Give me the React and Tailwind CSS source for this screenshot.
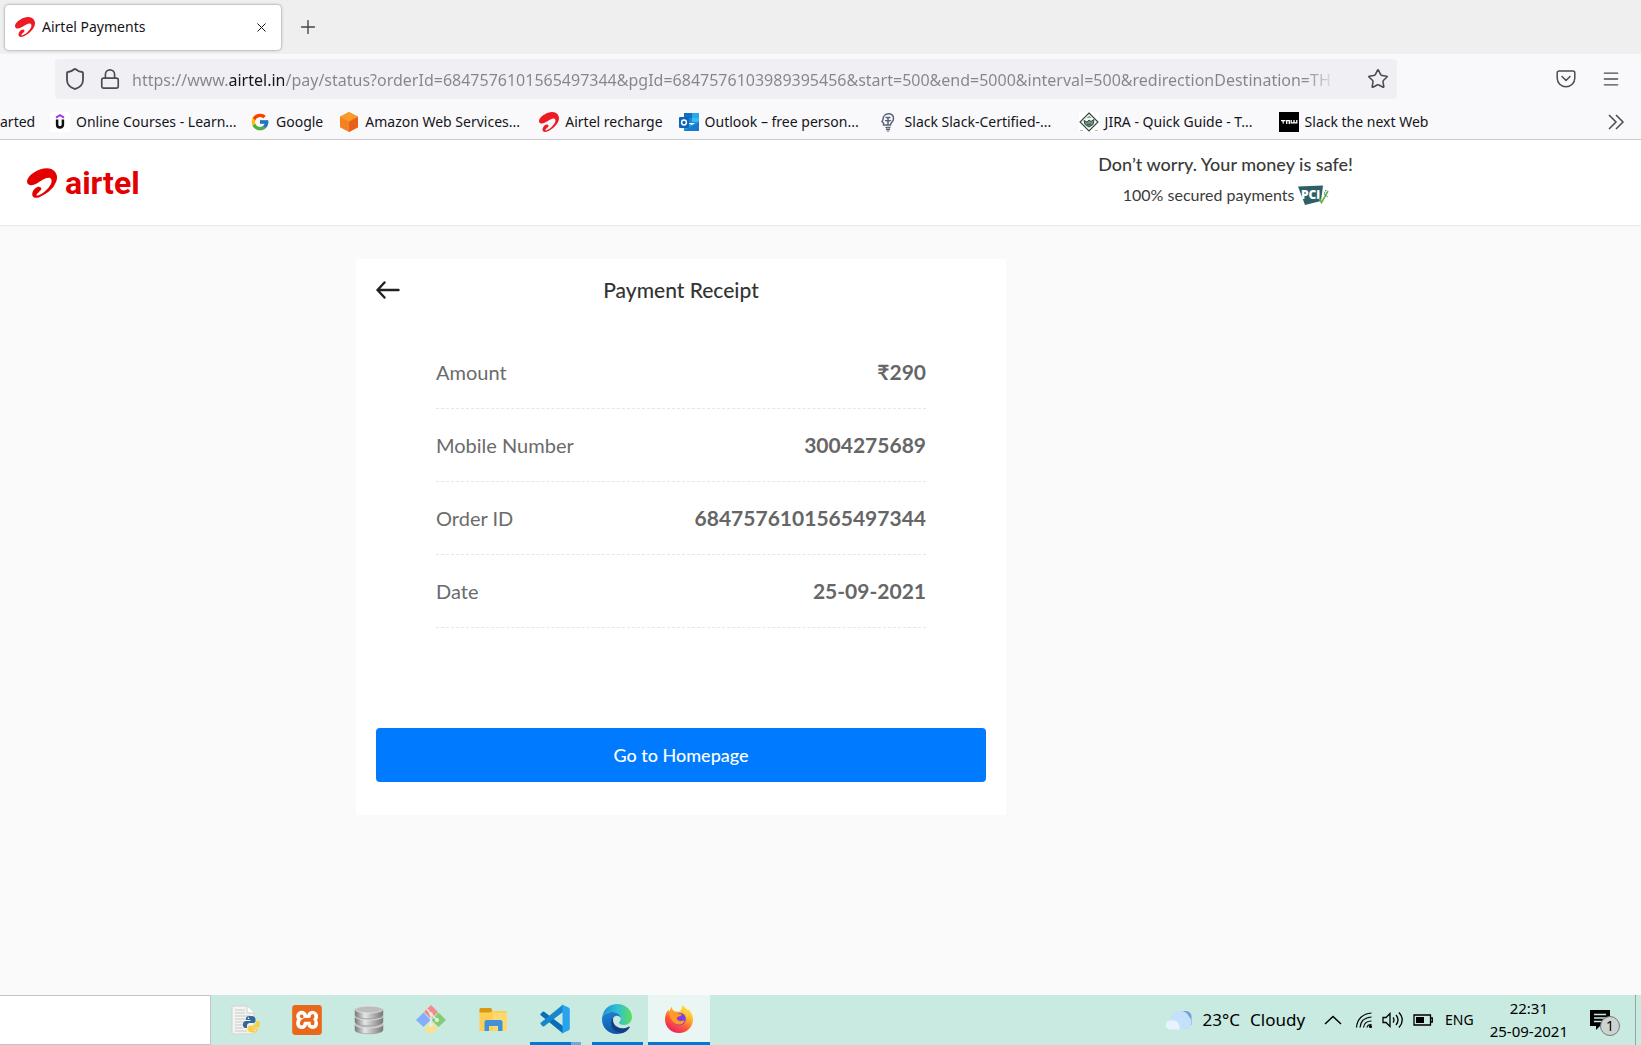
import { Plus, X, Shield, Lock, Star, Menu } from "lucide-react";
import { FcGoogle } from "react-icons/fc";
import { SiAirtel, SiXampp } from "react-icons/si";

const URL_TEXT =
  "https://www.airtel.in/pay/status?orderId=6847576101565497344&pgId=6847576103989395456&start=500&end=5000&interval=500&redirectionDestination=TH";

function AirtelMark({ className }) {
  return <SiAirtel className={className} aria-hidden="true" />;
}

function UdemyIcon() {
  return (
    <svg viewBox="0 0 20 20" className="h-5 w-5 shrink-0" aria-hidden="true">
      <rect width="20" height="20" rx="3" fill="#fff" />
      <path d="M6 5.6 10 3.2l4 2.4" fill="none" stroke="#a435f0" strokeWidth="1.9" />
      <path d="M7.1 7.6v5.2c0 3.6 5.8 3.6 5.8 0V7.6" fill="none" stroke="#111" strokeWidth="2.5" />
    </svg>
  );
}

function CubeIcon() {
  return (
    <svg viewBox="0 0 20 20" className="h-5 w-5 shrink-0" aria-hidden="true">
      <path d="M10 0l9 4.8v10.4L10 20l-9-4.8V4.8z" fill="#f58220" />
      <path d="M10 0l9 4.8-9 4.9-9-4.9z" fill="#fb9a2c" />
      <path d="M19 4.8v10.4L10 20V9.700z" fill="#e8611c" />
    </svg>
  );
}

function OutlookIcon() {
  return (
    <svg viewBox="0 0 20 20" className="h-5 w-5 shrink-0" aria-hidden="true">
      <rect x="5" y="1" width="15" height="10" fill="#1a86d8" />
      <rect x="5" y="1" width="8" height="5" fill="#0f6fc0" />
      <rect x="13" y="1" width="7" height="5" fill="#28a8ea" />
      <rect x="13" y="6" width="7" height="4" fill="#3cb8f0" />
      <path d="M5 9l7.500 4L20 9v10H5z" fill="#1b9be6" />
      <path d="M5 19l15-9v9z" fill="#1a78c8" />
      <rect y="5" width="10" height="11" rx="1" fill="#0f64b5" />
      <circle cx="5" cy="10.500" r="2.400" fill="none" stroke="#fff" strokeWidth="1.500" />
    </svg>
  );
}

function BulbIcon() {
  return (
    <svg viewBox="0 0 20 20" className="h-5 w-5 shrink-0" fill="none" stroke="#5b6378" strokeWidth="1.500" aria-hidden="true">
      <path d="M6.500 13H4.500v-2L3 9.500 4 7.500C4 0 15 0 14.500 6.500c0 3.500-3 4-3 6.500z" />
      <path d="M6.500 5.500h5M9 5.500V13M6.500 8c0 1 5 1 5 0M6.500 15.500h5M7 17.500h4M8.500 19.200h1" />
    </svg>
  );
}

function TutorialsIcon() {
  return (
    <svg viewBox="0 0 20 20" className="h-5 w-5 shrink-0" aria-hidden="true">
      <rect width="20" height="20" fill="#fff" />
      <path d="M10 1l9 9-9 9-9-9z" fill="#f4f6f4" stroke="#33423a" strokeWidth="1.100" />
      <path d="M5 8.500l3 1.500 2-2 2 1.500 3-2-1 5-4 2.500-4-2.500z" fill="#74917f" stroke="#33503f" />
      <path d="M8.500 6l1.500-1.500L11.500 6M8 12l2 1 2-1" fill="none" stroke="#33503f" />
      <path d="M1 18.500h3M16 18.500h3" stroke="#bbb" />
    </svg>
  );
}

function TnwIcon() {
  return (
    <svg viewBox="0 0 20 20" className="h-5 w-5 shrink-0" aria-hidden="true">
      <rect width="20" height="20" fill="#000" />
      <g fill="none" stroke="#fff" strokeWidth="1.300">
        <path d="M2 8.700h4.500M4.200 8.500v3M7.700 12V8.700h2.600V12M12.200 8v2.900h5.600V8M15 8v2.900" />
      </g>
    </svg>
  );
}

const BOOKMARKS = [
  { label: "Online Courses - Learn...", icon: <UdemyIcon />, wide: true },
  { label: "Google", icon: <FcGoogle className="h-5 w-5 shrink-0" /> },
  { label: "Amazon Web Services...", icon: <CubeIcon />, wide: true },
  { label: "Airtel recharge", icon: <AirtelMark className="h-5 w-5 shrink-0 text-[#ed1c24]" /> },
  { label: "Outlook – free person...", icon: <OutlookIcon />, wide: true },
  { label: "Slack Slack-Certified-...", icon: <BulbIcon />, wide: true },
  { label: "JIRA - Quick Guide - T...", icon: <TutorialsIcon />, wide: true },
  { label: "Slack the next Web", icon: <TnwIcon /> },
];

function BrowserChrome() {
  return (
    <div className="text-sm text-[#15141a]">
      <div className="flex h-[54px] items-center bg-[#efefef] px-[5px]">
        <div className="flex h-[45px] w-[276px] items-center rounded-[4px] bg-white pr-3 pl-2.5 shadow-[0_0_3px_rgba(0,0,0,0.45)]">
          <AirtelMark className="h-5 w-5 text-[#ed1c24]" />
          <span className="ml-[7px] flex-1">Airtel Payments</span>
          <button aria-label="Close tab" className="flex h-4 w-4 items-center justify-center">
            <X size={15} strokeWidth={1.6} />
          </button>
        </div>
        <button aria-label="New tab" className="ml-[15px] flex h-6 w-6 items-center justify-center text-[#45444c]">
          <Plus size={22} strokeWidth={1.5} />
        </button>
      </div>

      <div className="flex h-[50px] items-center bg-[#f9f9fb] pr-5 pl-[55px] text-[#4c4b54]">
        <div className="mr-[159px] flex h-10 min-w-0 flex-1 items-center rounded-[4px] bg-[#f0f0f4] pr-2 pl-2">
          <Shield size={24} strokeWidth={1.8} className="shrink-0" />
          <Lock size={22} strokeWidth={1.8} className="ml-3 shrink-0" />
          <input
            aria-label="Address"
            readOnly
            value={URL_TEXT}
            className="ml-[11px] min-w-0 flex-1 bg-[linear-gradient(90deg,#85848b_0,#85848b_97px,#15141a_97px,#15141a_152px,#85848b_152px,#85848b_calc(100%_-_55px),transparent_calc(100%_-_22px))] bg-clip-text pt-0.5 font-['Noto_Sans',sans-serif] text-base text-transparent outline-none"
          />
          <button aria-label="Bookmark this page" className="ml-2">
            <Star size={22} strokeWidth={1.7} />
          </button>
        </div>
        <button aria-label="Save to Pocket" className="mr-[25px]">
          <svg viewBox="0 0 20 20" className="h-5 w-5" fill="none" stroke="currentColor" strokeWidth="1.500" strokeLinecap="round" strokeLinejoin="round">
            <path d="M3 2h14a1.800 1.800 0 0 1 1.800 1.800V9a8.800 8.800 0 0 1-17.600 0V3.800A1.800 1.800 0 0 1 3 2z" />
            <path d="M6 7.500l4 4 4-4" />
          </svg>
        </button>
        <button aria-label="Open application menu">
          <Menu size={20} strokeWidth={1.6} />
        </button>
      </div>

      <nav className="flex h-9 items-center gap-4 border-b border-[#c8c8ce] bg-[#f9f9fb] pr-4 whitespace-nowrap">
        <a href="#started" className="w-[34px]">arted</a>
        {BOOKMARKS.map((b) => (
          <a key={b.label} href="#bookmark" className={b.wide ? "flex w-46 items-center gap-1.5" : "flex items-center gap-1.5"}>
            {b.icon}
            {b.label}
          </a>
        ))}
        <button aria-label="Show more bookmarks" className="ml-auto text-[#4c4b54]">
          <svg viewBox="0 0 18 18" className="h-[18px] w-[18px]" fill="none" stroke="currentColor" strokeWidth="1.500">
            <path d="M2 2l7 7-7 7M9 2l7 7-7 7" />
          </svg>
        </button>
      </nav>
    </div>
  );
}

function PciBadge() {
  return (
    <svg viewBox="0 0 32 22" className="h-[22px] w-8" role="img" aria-label="PCI">
      <path d="M1 2.500 26 1.500 24 17 8 21z" fill="#2c6066" />
      <text x="4" y="15" fill="#fff" fontSize="12" fontWeight="800" fontFamily="Open Sans, sans-serif">PCi</text>
      <path d="M22 14l2.500 4.500L31 7" fill="none" stroke="#5fb548" strokeWidth="1.600" />
      <path d="M29 6l-2 4 4 3" fill="none" stroke="#2c6066" strokeDasharray="1.500 1" />
    </svg>
  );
}

const DETAILS = [
  ["Amount", "₹290"],
  ["Mobile Number", "3004275689"],
  ["Order ID", "6847576101565497344"],
  ["Date", "25-09-2021"],
];

function PaymentPage() {
  return (
    <div className="flex-1 bg-[#fafafa] font-['Lato',sans-serif]">
      <header className="flex h-[86px] items-center justify-between border-b border-[#e8e8e8] bg-white pr-[288px] pl-[27px]">
        <a href="#home" aria-label="airtel" className="flex items-center gap-2 text-[#e40000]">
          <AirtelMark className="h-[30px] w-[30px]" />
          <span className="font-['Roboto',sans-serif] text-[32px] leading-10 font-bold">airtel</span>
        </a>
        <div className="flex flex-col items-center pb-2 text-[#3a3a3a]">
          <p className="text-lg leading-8 font-medium">Don’t worry. Your money is safe!</p>
          <p className="flex items-center gap-0.5 text-base leading-[30px]">
            100% secured payments <PciBadge />
          </p>
        </div>
      </header>

      <main className="mt-[33px] ml-[356px] w-full max-w-[650px] bg-white px-5 pb-[33px]">
        <div className="grid grid-cols-[1fr_auto_1fr] items-center pt-[15px]">
          <button aria-label="Back" className="text-[#212121]">
            <svg viewBox="0 0 24 18" className="h-[18px] w-6" fill="none" stroke="currentColor" strokeWidth="2.400" strokeLinecap="round" strokeLinejoin="round">
              <path d="M8.500 1.500 1.500 9l7 7.500M1.500 9h21" />
            </svg>
          </button>
          <h1 className="text-[21px] leading-8 font-medium text-[#333]">Payment Receipt</h1>
        </div>
        <dl className="mx-[60px] mt-[30px] mb-[100px]">
          {DETAILS.map(([name, value]) => (
            <div key={name} className="flex h-[73px] items-center justify-between border-b border-dashed border-[#e6e6e6]">
              <dt className="text-xl text-[#6b6b6b]">{name}</dt>
              <dd className="text-[21px] font-bold text-[#666]">{value}</dd>
            </div>
          ))}
        </dl>
        <button className="h-[54px] w-full rounded-[4px] bg-[#007bff] text-lg font-medium text-white">Go to Homepage</button>
      </main>
    </div>
  );
}

function PythonFileIcon() {
  return (
    <svg viewBox="0 0 30 30" className="h-[30px] w-[30px]">
      <path d="M2 1h15l7 7v21H2z" fill="#f3f3f1" stroke="#d0d3d1" />
      <path d="M17 1v7h7" fill="#fff" stroke="#ccc" />
      <path d="M5 5h10M5 8h10M5 11h15M5 14h12M5 17h9M5 20h8M5 23h8M5 26h12" stroke="#c8cac9" />
      <path d="M20 11c-4 0-4 1.500-4 4h4.500v1H16c-4 0-4 7-.5 7H17v-2c0-2 1-3 3-3h3c2 0 2.500-1 2.500-2.500C25.500 12.500 25 11 20 11z" fill="#31679b" />
      <path d="M23.500 27.500c4 0 4-1.500 4-4H23v-1h4.500c3.500 0 3.500-6.500 0-6.500H26v1.500c0 2-1 3-3 3h-2.500c-2 0-3 1-3 3 0 2.500 1.500 4 6 4z" fill="#fad045" />
      <circle cx="18.500" cy="13.200" r=".8" fill="#fff" />
      <circle cx="25" cy="25.500" r=".8" fill="#fff" />
    </svg>
  );
}

function XamppIcon() {
  return (
    <span className="flex h-[30px] w-[30px] items-center justify-center rounded-[4px] bg-white text-[#e8681c]">
      <SiXampp className="h-[30px] w-[30px]" />
    </span>
  );
}

function DatabaseIcon() {
  return (
    <svg viewBox="0 0 30 30" className="h-[30px] w-[30px]">
      <defs>
        <linearGradient id="metal">
          <stop offset="0" stopColor="#777" />
          <stop offset=".35" stopColor="#e6e6e6" />
          <stop offset="1" stopColor="#777" />
        </linearGradient>
      </defs>
      {[19, 11, 4].map((y) => (
        <g key={y}>
          <path d={`M1 ${y}v6c0 5 28 5 28 0v-6z`} fill="url(#metal)" stroke="#8b8b8b" strokeWidth=".5" />
          <ellipse cx="15" cy={y + 0.5} rx="14" ry="3.500" fill="#bdbdbd" stroke="#eee" strokeWidth=".6" />
        </g>
      ))}
    </svg>
  );
}

function GitIcon() {
  return (
    <svg viewBox="0 0 30 30" className="h-[30px] w-[30px]">
      <path d="M15 0l7 7-7 7-7-7z" fill="#f28b8b" />
      <path d="M7.500 7.500l7 7.500-7 7L0 15z" fill="#84adfb" />
      <path d="M22.500 7.500L30 15l-7.500 7-7-7z" fill="#86cc74" />
      <path d="M15 16l7 7-7 7-7-7z" fill="#f7e294" />
      <path d="M11 4l4 5v10M15 9l6 6" fill="none" stroke="#dff0e8" strokeWidth="1.500" />
      <circle cx="15" cy="9" r="1.800" fill="#dff0e8" />
      <circle cx="15" cy="20" r="2" fill="#dff0e8" />
      <circle cx="21" cy="15" r="2" fill="#dff0e8" />
    </svg>
  );
}

function FolderIcon() {
  return (
    <svg viewBox="0 0 30 30" className="h-[30px] w-[30px]">
      <path d="M1.500 4.500q0-1.500 1.500-1.500h10l2 3h12.500q1.500 0 1.500 1.500V26H1.500z" fill="#ffcf55" />
      <path d="M1.500 7.500v-3Q1.500 3 3 3h9q2 0 2 2t-2 2.500z" fill="#d79a12" />
      <path d="M15 8h14v18H15z" fill="#ffd970" />
      <path d="M6.500 26V17q0-2 2-2h14q2 0 2 2v9h-4.500v-5h-9v5z" fill="#3f92d8" />
    </svg>
  );
}

function VsCodeIcon() {
  return (
    <svg viewBox="0 0 30 30" className="h-[30px] w-[30px]">
      <path d="M.7 9.700 2.600 7.800q.8-.6 1.600 0L23 22v7.500L.7 11.200q-.7-.8 0-1.500z" fill="#0a6db5" />
      <path d="M.7 20.300l1.900 1.900q.8.600 1.600 0L23 8V.500L.7 18.800q-.7.800 0 1.500z" fill="#1687cc" />
      <path d="M21.500.3 28.500 3.500q1.300.7 1.300 2v19q0 1.300-1.300 2L21.500 29.700q-.9.200-1.500-.7 2.300 1.700 2.500-1.200V2.200Q22.300-.700 20 1q.6-.9 1.500-.7z" fill="#2aa3ee" />
    </svg>
  );
}

function EdgeIcon() {
  return (
    <svg viewBox="0 0 30 30" className="h-[30px] w-[30px]">
      <defs>
        <linearGradient id="edgeTop" x1="0" y1=".4" x2="1" y2=".4">
          <stop offset="0" stopColor="#1b8fd8" />
          <stop offset=".5" stopColor="#2fc0d8" />
          <stop offset="1" stopColor="#5fdd58" />
        </linearGradient>
        <linearGradient id="edgeBody" x1="0" y1="0" x2=".3" y2="1">
          <stop offset="0" stopColor="#1d86d6" />
          <stop offset="1" stopColor="#1159a8" />
        </linearGradient>
      </defs>
      <path d="M.2 13C1.500 5 7.500 0 15 0c9 0 15 6.500 15 13 0 5-3.700 8-8 8-3 0-5-1.200-5-2.200 0-1 1.700-1.500 1.700-4.300 0-3.500-3.500-6.500-8.200-6.500C5 8 1.500 10 .2 13z" fill="url(#edgeTop)" />
      <path d="M.2 13C2 9.500 6 8 10.500 8c4.700 0 8 3 8.200 6-1.200-1.700-3-2.500-5-2-3 1-4.700 4-3.700 8.500C11 25.500 16 29 19.500 29.300 9 32.500-1.500 24.500.2 13z" fill="url(#edgeBody)" />
      <path d="M11.500 13.200C8 16 8.500 22 11.700 25.500c3.500 3.800 8.300 4.700 10.800 2.800 2-1 4-3 5-4.600.5-.9-.2-1.500-1-1-5.500 3-12 1.500-14.500-3-1.200-2.200-1.300-4.500-.5-6.500z" fill="#123e83" />
    </svg>
  );
}

function FirefoxIcon() {
  return (
    <svg viewBox="0 0 30 30" className="h-[30px] w-[30px]">
      <defs>
        <linearGradient id="foxFire" x1=".85" y1="0" x2=".25" y2="1">
          <stop offset="0" stopColor="#fff14a" />
          <stop offset=".35" stopColor="#ffb52c" />
          <stop offset=".65" stopColor="#ff5a36" />
          <stop offset="1" stopColor="#e9186f" />
        </linearGradient>
      </defs>
      <path d="M18 1c2 2 4.500 3 6 5.500.6-.5.500-1 .500-1.500 2.500 3 4.500 6.500 4.500 10.500C29 23 23 29 15 29S1 23 1 15.500C1 11 2.500 8 4.500 5.500c0 1 .2 1.700.5 2.500L7.500 2.500C8 5 9 6.500 11 7.500h5c1.500-1.500 2.200-4 2-6.500z" fill="url(#foxFire)" />
      <circle cx="15.500" cy="15" r="6.300" fill="#7b3fe4" />
      <path d="M5 9c3-2 7-1.500 9 .5 1.700 0 3.500.2 3.500 1.200 0 1.500-3.500 1.300-4.500 3-.5 1.300 0 3 3 3.300 2 .2 3-.7 4.500-.3-1 3-3.500 4.300-6.500 3.800C9 19.500 6 14.500 5 9z" fill="#ff9a2a" />
      <path d="M18 6.500c3.500 1 5.500 4 5.300 8 1.200-2 1-5-.8-7.500z" fill="#ffd13b" />
    </svg>
  );
}

const TASKS = [
  { name: "Python", icon: <PythonFileIcon /> },
  { name: "XAMPP", icon: <XamppIcon /> },
  { name: "Database", icon: <DatabaseIcon /> },
  { name: "Git", icon: <GitIcon /> },
  { name: "File Explorer", icon: <FolderIcon /> },
  { name: "Visual Studio Code", icon: <VsCodeIcon />, stack: true },
  { name: "Microsoft Edge", icon: <EdgeIcon />, open: true },
  { name: "Firefox", icon: <FirefoxIcon />, active: true },
];

function Taskbar() {
  return (
    <footer className="flex h-[50px] items-center bg-[#c8eae1] text-black">
      <input aria-label="Search" className="h-full w-[211px] border border-l-0 border-[#c3c5c5] bg-white px-3 outline-none" />
      <div className="ml-[3px] flex h-full">
        {TASKS.map((t) => (
          <button
            key={t.name}
            aria-label={t.name}
            className={t.active ? "flex w-[62px] flex-col items-center bg-[#e9f6f3]" : "flex w-[62px] flex-col items-center"}
          >
            <span className="flex flex-1 items-center">{t.icon}</span>
            {t.stack && (
              <span className="flex h-[3px] w-[51px]">
                <span className="flex-1 bg-[#0078d7]" />
                <span className="w-2.5 bg-[#6fa9d6]" />
              </span>
            )}
            {t.open && <span className="h-[3px] w-[51px] bg-[#0078d7]" />}
            {t.active && <span className="h-[3px] w-full bg-[#0078d7]" />}
          </button>
        ))}
      </div>

      <button className="ml-auto flex items-center text-[17px]">
        <svg viewBox="0 0 28 20" className="mr-2.5 h-5 w-7" aria-hidden="true">
          <path d="M15 3C19-1 27 1 26.500 7v8H15z" fill="#6f9fd8" />
          <path d="M6 19.500c-7 0-7-8.500-.5-9C6 3 10 .5 15 1c5 .4 8 2.500 9 5.500 3 2 4 13-3 13z" fill="#c4e0fb" />
          <path d="M6 19.500c-7 0-7-8.500-.5-9 5-1 10 2 9 9z" fill="#e8f3fe" />
        </svg>
        <span className="mr-2.5">23°C</span>
        <span>Cloudy</span>
      </button>
      <button aria-label="Show hidden icons" className="ml-[19px]">
        <svg viewBox="0 0 18 10" className="h-2.5 w-[18px]" fill="none" stroke="currentColor" strokeWidth="1.500">
          <path d="M1 9l8-7.500L17 9" />
        </svg>
      </button>
      <button aria-label="Network" className="ml-[13px]">
        <svg viewBox="0 0 18 18" className="h-[18px] w-[18px]" fill="none" stroke="currentColor" strokeWidth="1.200">
          <path d="M1.500 16.500C2 8 8 2.500 16.500 2M5 16.500C5.500 10.500 9.500 6.500 16.500 6M8.500 16.500c.5-4 3-6.500 8-6.500M12 16.500c.3-1.700 1.500-3 4.500-3" />
          <circle cx="15.500" cy="15.500" r="1" fill="currentColor" />
        </svg>
      </button>
      <button aria-label="Volume" className="ml-[9px]">
        <svg viewBox="0 0 22 18" className="h-[18px] w-[22px]" fill="none" stroke="currentColor" strokeWidth="1.300">
          <path d="M1 6.500h3l4-4v13l-4-4H1zM11 6.500q2 2.500 0 5M14 4q4 5 0 10M17 1.500q6.500 7.500 0 15" />
        </svg>
      </button>
      <button aria-label="Battery" className="ml-[9px]">
        <svg viewBox="0 0 20 12" className="h-3 w-5" fill="none" stroke="currentColor" strokeWidth="1.300">
          <path d="M1 1h16.500v10H1zM18 4h1.300v4H18" />
          <path d="M3 3h8v6H3z" fill="currentColor" stroke="none" />
        </svg>
      </button>
      <button className="ml-3 text-sm">ENG</button>
      <button className="ml-4 text-[15px] leading-[23px]">
        <span className="block">22:31</span>
        <span className="block">25-09-2021</span>
      </button>
      <button aria-label="Notifications" className="relative ml-[22px] h-8 w-[30px]">
        <svg viewBox="0 0 20 20" className="h-5 w-5" aria-hidden="true">
          <path d="M0 0h20v16H10l-4 4v-4H0z" fill="#000" />
          <path d="M4 4.500h12M4 8h12M4 11.500h8" stroke="#c8eae1" strokeWidth="1.300" />
        </svg>
        <span className="absolute right-0 bottom-0 flex h-5 w-5 items-center justify-center rounded-full border border-[#777] bg-[#cdd3d1] text-sm leading-none">1</span>
      </button>
      <span className="ml-[15px] h-full w-[6px] border-l border-[#8fa9a2]" />
    </footer>
  );
}

export default function App() {
  return (
    <div className="flex min-h-screen flex-col overflow-x-hidden bg-[#fafafa] font-['Noto_Sans',sans-serif]">
      <BrowserChrome />
      <PaymentPage />
      <Taskbar />
    </div>
  );
}
